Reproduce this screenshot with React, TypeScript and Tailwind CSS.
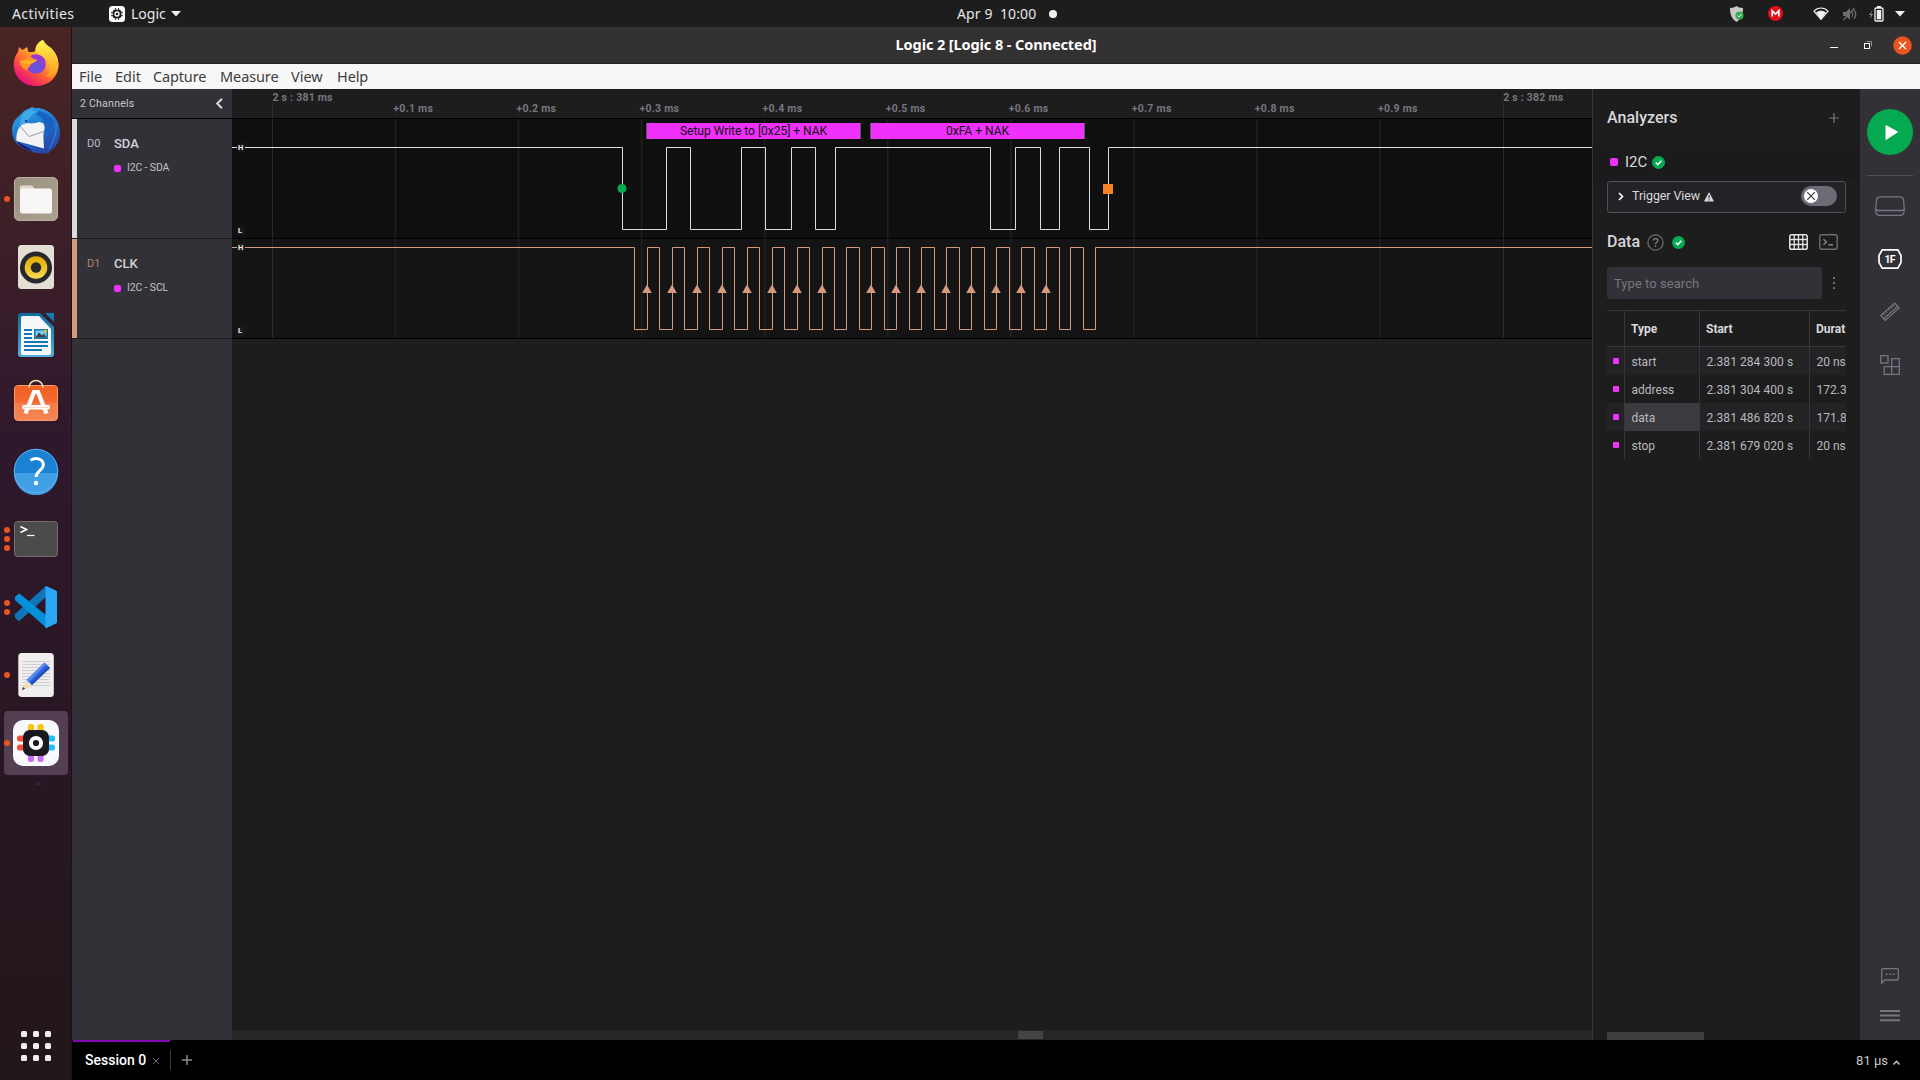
import React from "react";

const MAGENTA = "#f030fb";
const COPPER = "#d49a7c";

/* ---------- Dock icons (48 x 48) ---------- */

function Firefox() {
  return (
    <svg viewBox="0 0 48 48" className="size-12">
      <defs>
        <linearGradient id="ffBody" x1="0.85" y1="0.1" x2="0.25" y2="0.95">
          <stop offset="0" stopColor="#fff04a" />
          <stop offset="0.35" stopColor="#ffb02a" />
          <stop offset="0.65" stopColor="#ff5d36" />
          <stop offset="1" stopColor="#e8107d" />
        </linearGradient>
        <radialGradient id="ffGlobe" cx="0.5" cy="0.7" r="0.6">
          <stop offset="0" stopColor="#5a5ad8" />
          <stop offset="1" stopColor="#9838d8" />
        </radialGradient>
        <linearGradient id="ffTail" x1="0.5" y1="0" x2="0.5" y2="1">
          <stop offset="0" stopColor="#fff44f" />
          <stop offset="1" stopColor="#ff9a1f" />
        </linearGradient>
      </defs>
      <path d="M31 1c2 4 5 6 8 8 5 5 8 11 7.400 19C45.500 39 36 47 24 47 11 47 1.800 38 1.800 25.500c0-6 2.200-10 4.200-12.500l1-5 3.500 3L15 8l1.500 5h4l3-1C23 7 26 3 31 1Z" fill="url(#ffBody)" />
      <path d="M31 1c2 4 5 6 8 8 5 5 7.800 11 7.400 18C45 33 41 38 34 38c5-5 5-14-1-19-4-3-9-4-9.500-8C24 6 27 3 31 1Z" fill="url(#ffTail)" />
      <circle cx="24" cy="25" r="9.800" fill="url(#ffGlobe)" />
      <path d="M7.500 22c4-1 8-3 10-6.500 1.500 3 4 5 7.500 5-1 3-4 3-5.500 4-1 3-4 4-4.500 7C11 30 8 26 7.500 22Z" fill="#ff9520" />
      <path d="M7.500 22c4 0 8-1 12 0 2 0 4-1 5.500-1.500-1 2.500-4 3-5.500 4C16 25 11 25 7.500 22Z" fill="#ffb52c" />
    </svg>
  );
}

function Thunderbird() {
  return (
    <svg viewBox="0 0 48 48" className="size-12">
      <defs>
        <linearGradient id="tbBody" x1="0.3" y1="0" x2="0.8" y2="1">
          <stop offset="0" stopColor="#2ba0e6" />
          <stop offset="0.5" stopColor="#1c6fc9" />
          <stop offset="1" stopColor="#2b3fa0" />
        </linearGradient>
      </defs>
      <path d="M20 0c2 1 4 1 7 1 11 2 21 11 21 24 0 9-4 16-10 19l-2 3-2-1c-4 2-18-1-26-7C3 36 0 30 0 23c0-5 2-10 6-13l5-5c3-3 6-3 9-5Z" fill="url(#tbBody)" />
      <path d="M4 32c2 6 8 10 17 12L6 35Z" fill="#1b0f5e" />
      <path d="m10 17 7-1c2 1 7 0 10-1 4 1 6 1 5.500 7-2 5-.5 14-.5 19.500L4.500 34C4 28 5 22 10 17Z" fill="#f3f3f6" />
      <path d="m8 19 9 10.500L33 24" fill="none" stroke="#8f8f96" strokeWidth="0.900" />
      <path d="M8 19c-1-8 3-15 12-18-2 3 4 2 6 4-8 1-9 11-18 14Z" fill="#3fa9ea" />
      <path d="M26 4c8 1 15 6 17 14l-3-2 2 8-4-3-1 7-4-4c1-9-3-15-9-16Z" fill="#1763bf" />
      <path d="M44 16c1 10-2 18-7 26" stroke="#3a8ada" fill="none" />
      <circle cx="14" cy="14" r="1" fill="#0b2350" />
    </svg>
  );
}

function Files() {
  return (
    <svg viewBox="0 0 48 48" className="size-12">
      <defs>
        <linearGradient id="flBg" x1="0" y1="0" x2="1" y2="1">
          <stop offset="0" stopColor="#9a9080" />
          <stop offset="1" stopColor="#aaa18f" />
        </linearGradient>
      </defs>
      <rect x="2.500" y="2.500" width="43" height="43" rx="4.500" fill="url(#flBg)" stroke="#b8b09f" />
      <path d="M8 12.500a2 2 0 0 1 2-2h10l3.500 4H35v8H8Z" fill="#dedacd" />
      <rect x="8" y="13.500" width="32" height="25" rx="2.500" fill="#f8f7f6" />
    </svg>
  );
}

function Rhythmbox() {
  return (
    <svg viewBox="0 0 48 48" className="size-12">
      <defs>
        <linearGradient id="rbCone" x1="0" y1="0" x2="0" y2="1">
          <stop offset="0" stopColor="#e0a800" />
          <stop offset="1" stopColor="#fadb55" />
        </linearGradient>
      </defs>
      <rect x="6" y="2" width="36" height="44" rx="3.500" fill="#e3dfd4" />
      <circle cx="24" cy="24.500" r="16" fill="#262831" />
      <circle cx="24" cy="24.500" r="12.600" fill="#2e2b25" />
      <circle cx="24" cy="24.500" r="11.300" fill="url(#rbCone)" />
      <circle cx="24" cy="24.500" r="5.200" fill="#29282b" />
    </svg>
  );
}

function Writer() {
  return (
    <svg viewBox="0 0 48 48" className="size-12">
      <defs>
        <linearGradient id="wrBg" x1="0" y1="0" x2="0" y2="1">
          <stop offset="0" stopColor="#0f68a0" />
          <stop offset="1" stopColor="#56b0de" />
        </linearGradient>
      </defs>
      <path d="M9 2h19l14 14v27a3 3 0 0 1-3 3H9a3 3 0 0 1-3-3V5a3 3 0 0 1 3-3Z" fill="url(#wrBg)" />
      <path d="M33 2h9v9Z" fill="#127ab4" />
      <path d="M11 5h16l12 13v24a2 2 0 0 1-2 2H11a2 2 0 0 1-2-2V7a2 2 0 0 1 2-2Z" fill="#f7f8fa" />
      <path d="M12 19h8M12 23h8M12 27h8M12 31h24M12 35h24M12 39h18" stroke="#1778b0" strokeWidth="1.800" />
      <rect x="22" y="18" width="14" height="10" fill="#1778b0" />
      <path d="M23.500 19.500h11v7h-11Z" fill="#7fc8ee" />
      <path d="m23.500 26.500 3.500-5 3 3 2-2 2.500 4Z" fill="#3d4044" />
      <circle cx="33.500" cy="20" r="1.500" fill="#f2c21c" />
    </svg>
  );
}

function Software() {
  return (
    <svg viewBox="0 0 48 48" className="size-12">
      <defs>
        <linearGradient id="swBg" x1="0" y1="0" x2="0" y2="1">
          <stop offset="0" stopColor="#f35f22" />
          <stop offset="0.480" stopColor="#f36a32" />
          <stop offset="0.500" stopColor="#f47a45" />
          <stop offset="1" stopColor="#f38754" />
        </linearGradient>
      </defs>
      <rect x="2.500" y="6.500" width="43" height="35" rx="3.500" fill="url(#swBg)" stroke="#f79a6c" />
      <path d="M17 9C17 -1 31 -1 31 9" fill="none" stroke="#f3dcb0" strokeWidth="1.500" />
      <path d="m13.500 34.500 8.500-21.500h4l8.500 21.500" fill="none" stroke="#fff" strokeWidth="4.200" />
      <rect x="10" y="26" width="28" height="4.500" rx="2" fill="#fff" />
      <path d="M12 28.300h24" stroke="#f0b4a0" strokeWidth="0.600" />
    </svg>
  );
}

function Help() {
  return (
    <svg viewBox="0 0 48 48" className="size-12">
      <circle cx="24" cy="24" r="22.200" fill="#1b82d3" />
      <path d="M1.800 26h44.400a22.200 22.200 0 0 1-44.400 0Z" fill="#41a0e3" />
      <circle cx="24" cy="24" r="21.700" fill="none" stroke="#62b4ee" strokeWidth="0.900" />
      <path d="M18.500 13.200c6-3.500 13-1 12.800 4.800C31 23.500 24 24 24 30" fill="none" stroke="#fff" strokeWidth="2.900" />
      <circle cx="24" cy="36" r="2.200" fill="#fff" />
    </svg>
  );
}

function TerminalIcon() {
  return (
    <svg viewBox="0 0 48 48" className="size-12">
      <rect x="2.500" y="6.500" width="43" height="35" rx="3" fill="#4b4b4b" stroke="#6f706c" />
      <path d="m8.500 11.500 6 3-6 3" fill="none" stroke="#fff" strokeWidth="1.600" />
      <path d="M15 20.500h7.500" stroke="#fff" strokeWidth="1.200" />
    </svg>
  );
}

function VsCode() {
  return (
    <svg viewBox="0 0 48 48" className="size-12">
      <path d="M3.500 30.500 34 3l1 10L8 37.500c-1 .6-1.800.4-2.400-.2l-2.300-2.600c-.9-1.200-.8-3 .2-4.200Z" fill="#0f74b8" />
      <path d="M3.500 17.500c-.9-1.200-1-2.600-.2-3.700l2.400-2.500c.8-.7 1.700-.7 2.400-.2L35 33v12.500Z" fill="#0590d8" />
      <path d="m34 3.100 10 4.400c.8.500 1 1 1 2v29c0 1-.2 1.600-1 2l-10 4.800c-1-.5-.5-1-.5-2V5c0-1-.2-1.500.5-1.900Z" fill="#2aa8f3" />
    </svg>
  );
}

function TextEditor() {
  return (
    <svg viewBox="0 0 48 48" className="size-12">
      <rect x="6.300" y="2" width="35.500" height="44" rx="3.500" fill="#efefef" />
      <path d="M10 10.500h28M10 13.500h28M10 16.500h28M10 19.500h28M10 22.500h28M10 25.500h28M10 28.500h28M10 31.500h28M10 34.500h28" stroke="#cfcfcf" strokeWidth="1" />
      <path d="m10 39 3.500-8.500 6 5Z" fill="#f5dbb8" />
      <path d="m10 39 1-3 2.200 1.800Z" fill="#333" />
      <path d="M14.500 29 32.500 11.500l5.500 5.500-18 17Z" fill="#2f66dc" />
      <path d="M14.500 29 32.500 11.500l1.700 1.700L16.500 31Z" fill="#5b8cf2" />
      <path d="m18.300 32.300 18-17 1.700 1.700-18 17Z" fill="#2450b8" />
    </svg>
  );
}

function LogicIcon() {
  return (
    <svg viewBox="0 0 48 48" className="size-12">
      <rect x="1" y="1" width="46" height="46" rx="10" fill="#f8f9ff" />
      <g fill="#fcc30a">
        <rect x="16" y="5" width="6" height="9" rx="2.500" />
        <rect x="25.500" y="5" width="6" height="9" rx="2.500" />
      </g>
      <g fill="#fb4a35">
        <rect x="5" y="16.500" width="9" height="6" rx="2.500" />
        <rect x="5" y="25.500" width="9" height="6" rx="2.500" />
      </g>
      <g fill="#22bdfb">
        <rect x="34" y="16.500" width="9" height="6" rx="2.500" />
        <rect x="34" y="25.500" width="9" height="6" rx="2.500" />
      </g>
      <g fill="#c86cf8">
        <rect x="16" y="34" width="6" height="9" rx="2.500" />
        <rect x="25.500" y="34" width="6" height="9" rx="2.500" />
      </g>
      <rect x="11" y="11" width="26" height="26" rx="7" fill="#181a1f" />
      <circle cx="24" cy="24" r="5.100" fill="none" stroke="#fff" strokeWidth="4" />
    </svg>
  );
}

const dock: { name: string; icon: React.ReactNode; dots: number; active?: boolean }[] = [
  { name: "Firefox", icon: <Firefox />, dots: 0 },
  { name: "Thunderbird", icon: <Thunderbird />, dots: 0 },
  { name: "Files", icon: <Files />, dots: 1 },
  { name: "Rhythmbox", icon: <Rhythmbox />, dots: 0 },
  { name: "Writer", icon: <Writer />, dots: 0 },
  { name: "Software", icon: <Software />, dots: 0 },
  { name: "Help", icon: <Help />, dots: 0 },
  { name: "Terminal", icon: <TerminalIcon />, dots: 3 },
  { name: "Code", icon: <VsCode />, dots: 2 },
  { name: "Text Editor", icon: <TextEditor />, dots: 1 },
  { name: "Logic", icon: <LogicIcon />, dots: 1, active: true },
];

function Dock() {
  return (
    <aside className="flex w-[72px] shrink-0 flex-col border-r border-[#1c1019] bg-gradient-to-b from-[#4a2422] via-[#2f182c] via-40% to-[#211619]">
      <div className="flex flex-col pt-0.5">
        {dock.map((d) => (
          <div key={d.name} className="flex h-[68px] items-center pl-1">
            <div
              className={
                d.active
                  ? "relative flex size-16 items-center justify-center rounded bg-[#533f51]"
                  : "relative flex size-16 items-center justify-center"
              }
            >
              {d.icon}
              <div className="absolute inset-y-0 left-0 flex flex-col items-center justify-center gap-[3px]">
                {Array.from({ length: d.dots }, (_, i) => (
                  <span key={i} className="size-1.5 rounded-full bg-[#e95420]" />
                ))}
              </div>
            </div>
          </div>
        ))}
      </div>
      <div className="mt-[5px] ml-9 h-[3px] w-[5px] bg-[#2e2440]" />
      <div className="mt-auto mb-[19px] grid grid-cols-3 gap-1.5 self-center">
        {Array.from({ length: 9 }, (_, i) => (
          <span key={i} className="size-1.5 rounded-[1.500px] bg-[#f2f0ee]" />
        ))}
      </div>
    </aside>
  );
}

/* ---------- Desktop top bar ---------- */

function TopBar() {
  return (
    <header className="flex h-[27px] shrink-0 items-center bg-[#1d1d1d] font-['Noto_Sans',sans-serif] text-[14px] text-[#e6e6e6]">
      <div className="flex w-[860px] items-center">
        <span className="ml-3 w-[97px] tracking-[0.400px]">Activities</span>
        <svg viewBox="0 0 16 16" className="size-4">
          <rect width="16" height="16" rx="3.500" fill="#fff" />
          <path d="M6.500 2v12M9.500 2v12M2 6.500h12M2 9.500h12" stroke="#555" strokeWidth="1.300" />
          <rect x="3.800" y="3.800" width="8.400" height="8.400" rx="2" fill="#1d1d1d" />
          <circle cx="8" cy="8" r="2" fill="none" stroke="#fff" strokeWidth="1.300" />
        </svg>
        <span className="ml-1.5 w-[35px]">Logic</span>
        <svg viewBox="0 0 10 6" className="ml-[5px] h-[6px] w-[10px]">
          <path d="M0 0h10L5 5.500Z" fill="#f0f0f0" />
        </svg>
      </div>
      <div className="flex w-[840px] items-center pl-[97px]">
        <span className="w-[79px] whitespace-pre tracking-[0.100px]">Apr 9  10:00</span>
        <span className="ml-[13px] size-2 rounded-full bg-[#f2f2f2]" />
      </div>
      <div className="flex flex-1 items-center pl-[30px]">
        <svg viewBox="0 0 14 16" className="h-4 w-3.5">
          <path d="M0 2c3 0 5-1 6.500-2C8 1 10 2 13 2c0 7-2 11-6.500 14C2 13 0 9 0 2Z" fill="#c9c9c9" />
          <circle cx="9.500" cy="9.500" r="4" fill="#2fae4a" />
          <path d="m7.500 9.500 1.500 1.500 2.500-3" stroke="#fff" strokeWidth="1" fill="none" />
        </svg>
        <svg viewBox="0 0 15 15" className="ml-6 size-[15px]">
          <circle cx="7.500" cy="7.500" r="7.500" fill="#e20f1a" />
          <path d="M4.200 10.500V4.800l3.300 3.200 3.300-3.200v5.700" fill="none" stroke="#fff" strokeWidth="1.700" />
        </svg>
        <svg viewBox="0 0 16 13" className="ml-[30px] h-[13px] w-4">
          <path d="M1 4.200C5 0 11 0 15 4.200L8 12.500Z" fill="none" stroke="#f2f2f2" strokeWidth="1.100" />
          <path d="M3 5.600c3-2.600 7-2.600 10 0L8 12.200Z" fill="#f2f2f2" />
        </svg>
        <svg viewBox="0 0 16 14" className="ml-[13px] h-3.5 w-4">
          <path d="M1 5h3l4-4v12L4 9H1Z" fill="#6e6e6e" />
          <path d="m1.500 13 11-12M10 5q1.500 2 0 5M12 3q3.500 4 0 9" stroke="#6e6e6e" strokeWidth="1.200" fill="none" />
        </svg>
        <svg viewBox="0 0 15 16" className="ml-[11px] h-4 w-[15px]">
          <path d="M3.500 4 0 9h2l-1 4 3-5H2Z" fill="#8a8a8a" />
          <rect x="6" y="2" width="8" height="13" rx="1" fill="none" stroke="#f2f2f2" strokeWidth="1.300" />
          <rect x="8" y="0" width="4" height="2" fill="#f2f2f2" />
          <rect x="7.800" y="4" width="4.400" height="9.300" fill="#f2f2f2" />
        </svg>
        <svg viewBox="0 0 10 6" className="ml-[11px] h-[6px] w-[10px]">
          <path d="M0 0h10L5 5.500Z" fill="#f2f2f2" />
        </svg>
      </div>
    </header>
  );
}

function TitleBar() {
  return (
    <div className="flex h-[37px] shrink-0 items-center border-b border-[#242122] bg-[#343132]">
      <div className="w-[370px]" />
      <div className="flex-1 text-center font-['Noto_Sans',sans-serif] text-[14.500px] font-bold tracking-[-0.090px] text-white">
        Logic 2 [Logic 8 - Connected]
      </div>
      <div className="flex w-[370px] items-center justify-end pr-2">
        <span className="mt-[5px] mr-[26px] h-px w-2 bg-white" />
        <svg viewBox="0 0 8 8" className="mr-[21px] size-2">
          <path d="M2.500.5h5v5" stroke="#8d8b8b" fill="none" />
          <rect x="0.500" y="2.500" width="5" height="5" fill="none" stroke="#fff" />
        </svg>
        <svg viewBox="0 0 19 19" className="size-[19px]">
          <circle cx="9.500" cy="9.500" r="9.300" fill="#e95420" />
          <path d="m6 6 7 7M13 6l-7 7" stroke="#fff" strokeWidth="1.400" />
        </svg>
      </div>
    </div>
  );
}

function MenuBar() {
  return (
    <nav className="flex h-[25px] shrink-0 items-center bg-[#f7f7f7] pl-[7px] font-['Noto_Sans',sans-serif] text-[14.500px] text-[#3d3d3d]">
      <span className="w-9">File</span>
      <span className="w-[38px]">Edit</span>
      <span className="w-[67px] tracking-[-0.150px]">Capture</span>
      <span className="w-[71px] tracking-[-0.100px]">Measure</span>
      <span className="w-[46px]">View</span>
      <span className="tracking-[-0.100px]">Help</span>
    </nav>
  );
}

/* ---------- Channels ---------- */

function Channel(props: { id: string; name: string; signal: string; tone: "white" | "copper" }) {
  const white = props.tone === "white";
  return (
    <div className={white ? "flex h-[120px] border-b border-[#1d1d20]" : "flex h-[100px] border-b border-[#1d1d20]"}>
      <div className={white ? "w-[5px] bg-[#dcdcdc]" : "w-[5px] bg-[#d49a7c]"} />
      <div className={white ? "w-[37px] pt-[17px] pl-2.5 text-[11px] leading-4 text-[#b9b9be]" : "w-[37px] pt-[17px] pl-2.5 text-[11px] leading-4 text-[#b98368]"}>
        {props.id}
      </div>
      <div className="pt-4">
        <div className="text-[13px] leading-[17px] font-medium text-[#d4d4d8]">{props.name}</div>
        <div className="mt-[9px] flex items-center text-[10.500px] leading-[14px] tracking-[-0.150px] text-[#c0c0c6]">
          <span className="mr-1.5 size-[7px] rounded-[2px] bg-[#f030fb]" />
          {props.signal}
        </div>
      </div>
    </div>
  );
}

function ChannelList() {
  return (
    <section className="w-40 shrink-0 bg-[#323137]">
      <div className="flex h-[30px] items-center justify-between border-b border-black pr-[9px] pl-2 text-[10.500px] text-[#c8c8cc]">
        <span className="pt-px tracking-[0.250px]">2 Channels</span>
        <svg viewBox="0 0 7 11" className="h-[11px] w-[7px]">
          <path d="M6 .8 1.200 5.500 6 10.200" fill="none" stroke="#d8d8dc" strokeWidth="2" />
        </svg>
      </div>
      <Channel id="D0" name="SDA" signal="I2C - SDA" tone="white" />
      <Channel id="D1" name="CLK" signal="I2C - SCL" tone="copper" />
    </section>
  );
}

/* ---------- Waveforms ---------- */

const sdaEdges = [390.5, 434.5, 458.5, 509.5, 533.5, 559.5, 583.5, 603.5, 758.5, 783.5, 808.5, 827.5, 857.5, 876.5];
const clkEdges = [
  402.5, 415.5, 427.5, 440.5, 452.5, 465.5, 477.5, 490.5, 502.5, 515.5, 527.5, 540.5, 552.5, 565.5, 577.5, 590.5, 602.5,
  614.5, 627.5, 639.5, 652.5, 664.5, 677.5, 689.5, 702.5, 714.5, 727.5, 739.5, 752.5, 764.5, 777.5, 789.5, 802.5, 814.5,
  827.5, 838.5, 851.5, 863.5,
];
const samples = [415, 440, 465, 490, 515, 540, 565, 590, 639, 664, 689, 714, 739, 764, 789, 814];

function wave(edges: number[], high: number, low: number) {
  let y = high;
  let d = `M0 ${high}`;
  for (const x of edges) {
    d += `H${x}`;
    y = y === high ? low : high;
    d += `V${y}`;
  }
  return d + "H1360";
}

function Plot() {
  const ticks = Array.from({ length: 11 }, (_, i) => ({ x: 40.5 + i * 123.07, major: i % 10 === 0, i }));
  return (
    <svg viewBox="0 0 1360 250" width="1360" height="250" className="block font-['Roboto',sans-serif]">
      <rect x="0" y="30" width="1360" height="119" fill="#0f0f0f" />
      <rect x="0" y="150" width="1360" height="99" fill="#141414" />
      {ticks.map((t) => (
        <g key={t.i}>
          <rect
            x={t.major ? Math.floor(t.x) : t.x - 0.9}
            y={t.major ? 14 : 25}
            width={t.major ? 1 : 1.6}
            height={t.major ? 235 : 224}
            fill={t.major ? "#2b2b2e" : "#202022"}
          />
          <text
            x={t.major ? t.x : t.x - 2.2}
            y={t.major ? 11.5 : 23}
            fontSize="10.500"
            fontWeight="700"
            fill="#77767f"
            textLength={t.major ? 60 : 39.5}
          >
            {t.major ? `2 s : ${t.i === 0 ? 381 : 382} ms` : `+0.${t.i} ms`}
          </text>
        </g>
      ))}
      <path d="M0 29.500h1360M0 149.500h1360M0 249.500h1360" stroke="#000" />
      <path d={wave(sdaEdges, 58.5, 140.5)} fill="none" stroke="#dcdcdc" />
      <path d={wave(clkEdges, 158.5, 240.5)} fill="none" stroke={COPPER} />
      {samples.map((x) => (
        <path key={x} d={`M${x} 195.500l4.800 8.500h-9.600Z`} fill={COPPER} />
      ))}
      <circle cx="390" cy="99.500" r="4.500" fill="#05a94f" />
      <rect x="871" y="95" width="10" height="10" fill="#f58220" />
      {[58.5, 141.5, 158.5, 241.5].map((y, i) => (
        <g key={y}>
          <rect x="5" y={y - 5} width="8" height="10" fill={i < 2 ? "#161616" : "#191919"} />
          <text x="6" y={y + 2.5} fontSize="7.500" fontWeight="700" fill="#f0f0f0">
            {i % 2 ? "L" : "H"}
          </text>
        </g>
      ))}
      <g fontSize="12" textAnchor="middle">
        <rect x="414" y="34" width="215" height="16" fill="#5a5a5a" />
        <rect x="415" y="34" width="213" height="16" fill={MAGENTA} />
        <text x="521.500" y="46" fill="#111" textLength="147">
          Setup Write to [0x25] + NAK
        </text>
        <rect x="638" y="34" width="215" height="16" fill="#5a5a5a" />
        <rect x="639" y="34" width="213" height="16" fill={MAGENTA} />
        <text x="745.500" y="46" fill="#111" textLength="63">
          0xFA + NAK
        </text>
      </g>
    </svg>
  );
}

/* ---------- Analyzer panel ---------- */

function Check() {
  return (
    <svg viewBox="0 0 13 13" className="size-[13px]">
      <circle cx="6.500" cy="6.500" r="6.500" fill="#05a94f" />
      <path d="m3.800 6.600 2 2 3.600-3.800" stroke="#fff" strokeWidth="1.500" fill="none" />
    </svg>
  );
}

const rows = [
  { type: "start", start: "2.381 284 300 s", dur: "20 ns" },
  { type: "address", start: "2.381 304 400 s", dur: "172.3" },
  { type: "data", start: "2.381 486 820 s", dur: "171.8" },
  { type: "stop", start: "2.381 679 020 s", dur: "20 ns" },
];

function AnalyzerPanel() {
  return (
    <section className="flex w-[268px] shrink-0 flex-col border-l border-[#37363c] bg-[#1d1d1d] text-[#d8d8dc]">
      <div className="flex h-[56px] items-center justify-between pt-0.5 pr-[21px] pl-3.5">
        <span className="text-[16px] font-medium tracking-[0.020px]">Analyzers</span>
        <svg viewBox="0 0 10 10" className="size-2.5">
          <path d="M5 0v10M0 5h10" stroke="#77767f" strokeWidth="1.200" />
        </svg>
      </div>
      <div className="flex h-9 items-center bg-[#1b1b1d] pb-0.5 pl-[17px]">
        <span className="size-2 rounded-[2px] bg-[#f030fb]" />
        <span className="mr-[5px] ml-[7px] text-[15px]">I2C</span>
        <Check />
      </div>
      <div className="mr-3.5 ml-3.5 flex h-8 items-center rounded-[3px] border border-[#515058] bg-[#232226] pr-2 pb-px pl-2.5">
        <svg viewBox="0 0 6 9" className="h-[9px] w-1.5">
          <path d="m1 1 3.500 3.500L1 8" stroke="#fff" strokeWidth="1.700" fill="none" />
        </svg>
        <span className="mr-[4px] ml-[8px] text-[12.500px] tracking-[-0.100px]">Trigger View</span>
        <svg viewBox="0 0 10 10" className="size-2.5">
          <path d="m5 0 5 9.500H0Z" fill="#d8d8dc" />
          <path d="M5 3.300v3M5 7.300v1.200" stroke="#232226" strokeWidth="1.100" />
        </svg>
        <span className="mb-px ml-auto flex h-5 w-9 items-center rounded-full bg-[#6d6b76] pl-[3px]">
          <svg viewBox="0 0 14 14" className="size-3.5">
            <circle cx="7" cy="7" r="7" fill="#fff" />
            <path d="m3.200 3.200 7.600 7.600M10.800 3.200l-7.600 7.600" stroke="#3a3940" strokeWidth="1.200" />
          </svg>
        </span>
      </div>
      <div className="flex h-[54px] items-center pt-1 pr-[22px] pl-3.5">
        <span className="w-10 text-[16px] font-medium">Data</span>
        <svg viewBox="0 0 17 17" className="mr-[8px] size-[17px]">
          <circle cx="8.500" cy="8.500" r="7.600" fill="none" stroke="#6d6c74" strokeWidth="1.200" />
          <path d="M6.200 6.500c.3-2.500 4.600-2.500 4.600 0 0 1.700-2.300 1.700-2.300 3.700" stroke="#8b8a92" strokeWidth="1.200" fill="none" />
          <circle cx="8.500" cy="12.300" r="0.800" fill="#8b8a92" />
        </svg>
        <Check />
        <svg viewBox="0 0 19 16" className="ml-auto h-4 w-[19px]">
          <rect x="0.800" y="0.800" width="17.400" height="14.400" rx="1.800" fill="none" stroke="#e4e4e8" strokeWidth="1.500" />
          <path d="M1 5.500h17M1 10.500h17M5.200 1v14M9.500 1v14M13.800 1v14" stroke="#e4e4e8" strokeWidth="1.300" />
        </svg>
        <svg viewBox="0 0 19 16" className="ml-[11px] h-4 w-[19px]">
          <rect x="0.800" y="0.800" width="17.400" height="14.400" rx="1.800" fill="none" stroke="#6d6c74" strokeWidth="1.400" />
          <path d="m4.500 5.200 3 2.800-3 2.800M9.500 10.800H14" stroke="#85848c" strokeWidth="1.400" fill="none" />
        </svg>
      </div>
      <div className="flex items-center pl-3.5">
        <div className="flex h-8 w-[215px] items-center rounded-[3px] bg-[#323137] pt-0.5 pl-[7px] text-[13px] tracking-[0.050px] text-[#797880]">
          Type to search
        </div>
        <div className="ml-[11px] flex flex-col gap-[3px]">
          <span className="size-0.5 rounded-full bg-[#85848c]" />
          <span className="size-0.5 rounded-full bg-[#85848c]" />
          <span className="size-0.5 rounded-full bg-[#85848c]" />
        </div>
      </div>
      <div className="mt-[11px] mr-3.5 ml-3.5 overflow-hidden border-t border-[#37363c] text-[12px]">
        <div className="grid h-9 grid-cols-[17px_75px_110px_60px] border-b border-[#37363c] font-bold">
          <span />
          <span className="flex items-center border-l border-[#37363c] pl-[6px]">Type</span>
          <span className="flex items-center border-l border-[#37363c] pl-[6px]">Start</span>
          <span className="flex items-center border-l border-[#37363c] pl-[6px]">Durat</span>
        </div>
        {rows.map((r, i) => (
          <div
            key={r.start}
            className={
              i % 2 === 0
                ? "grid h-7 grid-cols-[17px_75px_110px_60px] bg-[#232326] text-[#b9b9be]"
                : "grid h-7 grid-cols-[17px_75px_110px_60px] text-[#b9b9be]"
            }
          >
            <span className="flex items-center pl-1.5">
              <span className="size-1.5 rounded-[1px] bg-[#f030fb]" />
            </span>
            <span
              className={
                r.type === "data"
                  ? "flex items-center border-l border-[#37363c] bg-[#3b3a3f] pt-px pl-[6.500px]"
                  : "flex items-center border-l border-[#37363c] pt-px pl-[6.500px]"
              }
            >
              {r.type}
            </span>
            <span className="flex items-center border-l border-[#37363c] pt-px pl-[6.500px] tracking-[0.060px]">{r.start}</span>
            <span className="flex items-center border-l border-[#37363c] pt-px pl-[6.500px]">{r.dur}</span>
          </div>
        ))}
      </div>
      <div className="mt-auto ml-3.5 h-2 w-[97px] bg-[#3e3e3e]" />
    </section>
  );
}

function ToolRail() {
  return (
    <aside className="flex w-[60px] shrink-0 flex-col items-center bg-[#323137] text-[#77767f]">
      <svg viewBox="0 0 46 46" className="mt-5 size-[46px]">
        <circle cx="23" cy="23" r="23" fill="#05a94f" />
        <path d="M19 16.500 30.500 23 19 30.500Z" fill="#fff" stroke="#fff" strokeLinejoin="round" />
      </svg>
      <div className="mt-5 h-px w-[46px] bg-[#515058]" />
      <svg viewBox="0 0 30 20" className="mt-5 h-5 w-[30px]" fill="none" stroke="currentColor" strokeWidth="1.300">
        <path d="M5 .8h20q3 0 3.500 3l.8 9.500q0 6-3.500 6H4.200q-3.500 0-3.500-6L1.500 3.800Q2 .8 5 .8Z" />
        <path d="M.8 13.500q1 1 3 1h22.400q2 0 3-1" />
      </svg>
      <svg viewBox="0 0 24 20" className="mt-[33px] h-5 w-6">
        <path d="M4.200.9h15.600L23 6.500v7l-3.200 5.600H4.200L1 13.500v-7Z" fill="none" stroke="#fff" strokeWidth="1.700" />
        <text x="12" y="13.800" textAnchor="middle" fontSize="10.500" fontWeight="700" fill="#fff" textLength="11" className="font-['Roboto',sans-serif]">
          1F
        </text>
      </svg>
      <svg viewBox="0 0 20 20" className="mt-[33px] size-5" fill="none" stroke="currentColor" strokeWidth="1.200">
        <path d="m.8 13.500 14-12.500 4.400 5-14 12.500Z" />
        <path d="m3.800 16.800 14-12.500M3.500 11.500l1.200 1.300M6 9.300l1.200 1.300M8.500 7l1.200 1.300M11 4.800l1.200 1.300M13.300 2.700l1.200 1.300" />
      </svg>
      <svg viewBox="0 0 20 20" className="mt-[33px] size-5" fill="none" stroke="currentColor" strokeWidth="1.300">
        <rect x="0.700" y="0.700" width="7.300" height="7.300" />
        <path d="M11.700 3.700h7.600v15.600H4.200v-7.600h7.500ZM11.700 3.700v15.600M11.700 11.700h7.600" />
      </svg>
      <svg viewBox="0 0 18 16" className="mt-auto h-4 w-[18px]" fill="none" stroke="currentColor" strokeWidth="1.300">
        <path d="M.7 15V1.700q0-1 1-1h14.600q1 0 1 1v9.300q0 1-1 1H4Z" />
        <path d="M4.500 6.200h2M8 6.200h2M11.500 6.200h2" strokeWidth="1.600" />
      </svg>
      <svg viewBox="0 0 20 14" className="mt-[25px] mb-[17px] h-3.5 w-5" fill="none" stroke="currentColor" strokeWidth="2">
        <path d="M0 2h20M0 6.600h20M0 11.200h20" />
      </svg>
    </aside>
  );
}

function StatusBar() {
  return (
    <footer className="flex h-10 shrink-0 bg-black pl-px text-[#c8c8cc]">
      <div className="flex w-[97px] items-center border-t-2 border-[#8607b4] pb-0.5 pl-3">
        <span className="w-[61px] text-[14px] font-medium whitespace-nowrap text-white">Session 0</span>
        <svg viewBox="0 0 6 6" className="mt-0.5 ml-[7px] size-1.5">
          <path d="m0 0 6 6M6 0 0 6" stroke="#6b6a72" strokeWidth="1" />
        </svg>
      </div>
      <div className="my-2.5 w-px bg-[#3a393f]" />
      <svg viewBox="0 0 10 10" className="mt-[15px] ml-[11px] size-2.5">
        <path d="M5 0v10M0 5h10" stroke="#8b8a92" strokeWidth="1.500" />
      </svg>
      <div className="ml-auto flex items-center pt-0.5 pr-5 text-[13px]">
        81 µs
        <svg viewBox="0 0 7 5" className="mt-0.5 ml-[5px] h-[5px] w-[7px]">
          <path d="M.5 4.500 3.500 1.200l3 3.300" stroke="#c8c8cc" strokeWidth="1.400" fill="none" />
        </svg>
      </div>
    </footer>
  );
}

export default function App() {
  return (
    <div className="flex h-[1080px] w-[1920px] flex-col overflow-hidden bg-black font-['Roboto',sans-serif]">
      <TopBar />
      <div className="flex min-h-0 flex-1">
        <Dock />
        <main className="flex min-w-0 flex-1 flex-col">
          <TitleBar />
          <MenuBar />
          <div className="flex min-h-0 flex-1">
            <ChannelList />
            <section className="flex w-[1360px] shrink-0 flex-col bg-[#1d1d1d]">
              <Plot />
              <div className="mt-auto h-2.5 bg-[#262626] py-px pl-[786px]">
                <div className="h-2 w-[25px] bg-[#444444]" />
              </div>
            </section>
            <AnalyzerPanel />
            <ToolRail />
          </div>
          <StatusBar />
        </main>
      </div>
    </div>
  );
}
